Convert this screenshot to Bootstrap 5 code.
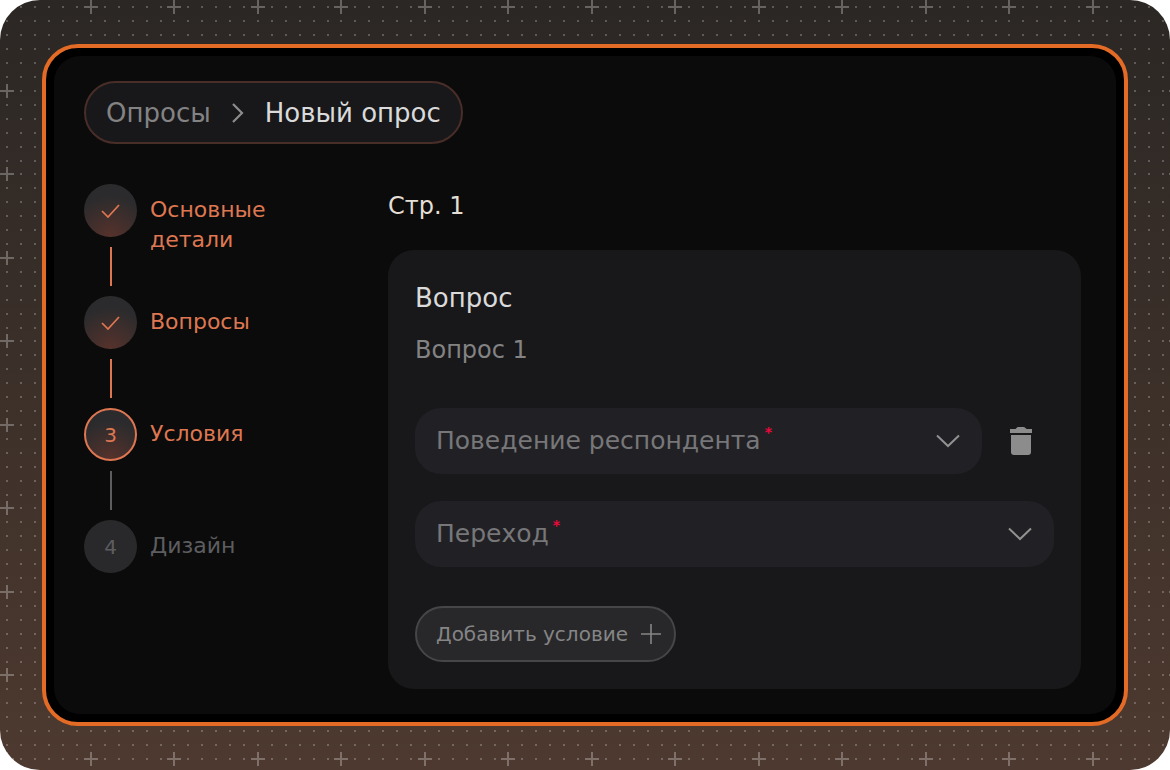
<!DOCTYPE html>
<html lang="ru">
<head>
<meta charset="utf-8">
<meta name="viewport" content="width=device-width, initial-scale=1">
<title>Новый опрос</title>
<link href="https://cdn.jsdelivr.net/npm/bootstrap@5.3.0/dist/css/bootstrap.min.css" rel="stylesheet">
<style>
:root { --accent: #de7751; --muted: #838384; --dim: #5d5d60; }
body { background: #fff; font-family: "DejaVu Sans", sans-serif; font-size: 20px; line-height: 30px; color: #dadada; }
.stage {
  min-height: 100vh; padding: 44px 42px; border-radius: 40px;
  background:
    url("data:image/svg+xml,%3Csvg xmlns='http://www.w3.org/2000/svg' width='167' height='167'%3E%3Cdefs%3E%3Cpattern id='d' width='14' height='14' patternUnits='userSpaceOnUse'%3E%3Cpath d='M6 6h2v2H6z' fill='%23fff' fill-opacity='.23'/%3E%3C/pattern%3E%3Cg id='t'%3E%3Cpath d='M14 0h69v83H14zM0 14h14v69H0z' fill='url(%23d)'/%3E%3Cpath d='M0 7h14M7 0v14' stroke='%23fff' stroke-opacity='.28' stroke-width='2'/%3E%3C/g%3E%3C/defs%3E%3Cuse href='%23t'/%3E%3Cuse href='%23t' x='84'/%3E%3Cuse href='%23t' y='84'/%3E%3Cuse href='%23t' x='84' y='84'/%3E%3C/svg%3E"),
    linear-gradient(#2b2724, #4d392f);
}
.window { border: 4px solid #e46b25; border-radius: 36px; background: #000; padding: 8px; }
.screen { background: #0b0b0b; border-radius: 26px; padding: 25px 35px 25px 30px; }
.crumbs { height: 63px; padding: 0 20px; border: 2px solid #482d28; border-radius: 32px; background: #18181a; font-size: 26px; gap: 20px; }
.crumbs a { color: var(--muted); }
.steps { width: 304px; }
.step-mark { width: 53px; }
.step-dot { width: 53px; height: 53px; border-radius: 50%; background: #29292b; color: var(--dim); }
.step-lit { background: radial-gradient(circle at 50% 100%, #57322b, #2b2b2d 70%); color: var(--accent); }
.step-now { border: 2px solid var(--accent); }
.step-line { width: 2px; height: 39px; margin: 10px 0; background: var(--dim); }
.step-name { width: 150px; padding-top: 11px; margin-left: 13px; font-size: 22px; color: var(--dim); }
.step-on .step-name, .step-active .step-name { color: var(--accent); }
.step-on .step-line { background: var(--accent); }
.page-title { font-size: 24px; line-height: 30px; margin: 7px 0 29px; color: #e4ded4; font-weight: 400; }
.panel { background: #18181a; border-radius: 26px; padding: 27px; }
.panel-title { font-size: 26px; line-height: 42px; font-weight: 400; margin: 0; }
.panel-text { font-size: 24px; line-height: 30px; margin: 16px 0 43px; color: var(--muted); }
.field-label { left: 21px; top: 18px; font-size: 25px; color: #777779; pointer-events: none; }
.field-label sup { color: #f0063c; font-size: 14px; font-weight: 700; top: -12px; margin-left: 4px; }
.field-box { height: 66px; border: 0; border-radius: 26px; color: #dadada; background-color: #212125;
  background-image: url("data:image/svg+xml,%3Csvg xmlns='http://www.w3.org/2000/svg' viewBox='0 0 24 14'%3E%3Cpath d='M1 1.5l11 10.5L23 1.5' fill='none' stroke='%23919192' stroke-width='2'/%3E%3C/svg%3E");
  background-size: 24px 14px; background-position: right 22px center; }
.field-next { margin-top: 27px; }
.trash { width: 72px; padding: 0 0 0 6px; }
.add { height: 56px; margin-top: 39px; padding: 0 13px 0 19px; border: 2px solid #464648; border-radius: 28px; background: #28282a; color: #858586; font-size: 20px; gap: 13px; }
.add:hover { background: #303032; color: #a0a0a0; border-color: #555; }
</style>
</head>
<body>
<div class="stage d-flex">
  <div class="window d-flex flex-grow-1">
    <main class="screen flex-grow-1">
      <nav class="crumbs d-inline-flex align-items-center" aria-label="Навигация">
        <a href="#" class="text-decoration-none">Опросы</a>
        <svg width="14" height="22" viewBox="0 0 14 22" fill="none" stroke="#8c8c8d" stroke-width="2.2"><path d="M2 2l9 9-9 9"/></svg>
        <span aria-current="page">Новый опрос</span>
      </nav>
      <div class="d-flex mt-4 pt-2">
        <ol class="steps list-unstyled flex-shrink-0 mb-0 pt-2">
          <li class="step-on d-flex">
            <div class="step-mark d-flex flex-column align-items-center">
              <span class="step-dot step-lit d-flex align-items-center justify-content-center"><svg width="20" height="16" viewBox="0 0 20 16" fill="none" stroke="currentColor" stroke-width="1.7"><path d="M1 8l6 6L18 2"/></svg></span>
              <span class="step-line"></span>
            </div>
            <span class="step-name">Основные детали</span>
          </li>
          <li class="step-on d-flex">
            <div class="step-mark d-flex flex-column align-items-center">
              <span class="step-dot step-lit d-flex align-items-center justify-content-center"><svg width="20" height="16" viewBox="0 0 20 16" fill="none" stroke="currentColor" stroke-width="1.7"><path d="M1 8l6 6L18 2"/></svg></span>
              <span class="step-line"></span>
            </div>
            <span class="step-name">Вопросы</span>
          </li>
          <li class="step-active d-flex">
            <div class="step-mark d-flex flex-column align-items-center">
              <span class="step-dot step-lit step-now d-flex align-items-center justify-content-center">3</span>
              <span class="step-line"></span>
            </div>
            <span class="step-name">Условия</span>
          </li>
          <li class="d-flex">
            <div class="step-mark d-flex flex-column align-items-center">
              <span class="step-dot d-flex align-items-center justify-content-center">4</span>
            </div>
            <span class="step-name">Дизайн</span>
          </li>
        </ol>
        <section class="flex-grow-1 pt-2">
          <h1 class="page-title">Стр. 1</h1>
          <form class="panel">
            <h2 class="panel-title">Вопрос</h2>
            <p class="panel-text">Вопрос 1</p>
            <div class="d-flex">
              <div class="position-relative flex-grow-1">
                <select id="behavior" class="field-box form-select" required><option value=""></option></select>
                <label for="behavior" class="field-label position-absolute">Поведение респондента<sup>*</sup></label>
              </div>
              <button type="button" class="trash btn border-0" aria-label="Удалить">
                <svg width="24" height="30" viewBox="0 0 24 30" fill="#8c8c8d"><path d="M1 3h5.500q1.500-2 3-2h5q1.500 0 3 2H23v4H1zM2 9h20v17q0 3-3 3H5q-3 0-3-3z"/></svg>
              </button>
            </div>
            <div class="field-next position-relative">
              <select id="jump" class="field-box form-select" required><option value=""></option></select>
              <label for="jump" class="field-label position-absolute">Переход<sup>*</sup></label>
            </div>
            <button type="button" class="add btn d-inline-flex align-items-center">Добавить условие
              <svg width="20" height="20" viewBox="0 0 20 20" fill="none" stroke="currentColor" stroke-width="1.6"><path d="M10 0v20M0 10h20"/></svg>
            </button>
          </form>
        </section>
      </div>
    </main>
  </div>
</div>
<script src="https://cdn.jsdelivr.net/npm/bootstrap@5.3.0/dist/js/bootstrap.bundle.min.js"></script>
</body>
</html>
